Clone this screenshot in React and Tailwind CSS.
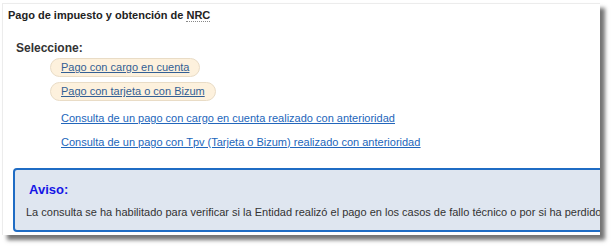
export default function App() {
  const font = { fontFamily: '"Liberation Sans", Arial, sans-serif' };
  return (
    <div className="w-[611px] h-[248px] bg-white overflow-hidden" style={font}>
      <div className="ml-[2px] mt-[3px] w-[598px] h-[232px] bg-white border-l border-t border-[#ececec] shadow-[5px_5px_4px_rgba(0,0,0,0.55)] overflow-hidden">
        <div className="pl-[5px] pt-[5px] text-[11px] font-bold text-[#222] leading-[13px]">
          Pago de impuesto y obtención de{' '}
          <abbr className="no-underline border-b border-dotted border-[#888]">NRC</abbr>
        </div>
        <div className="pl-[13px] pt-[19px] text-[12px] font-bold text-[#333] leading-[14px]">Seleccione:</div>
        <div className="pl-[47px] pt-[3px] flex flex-col items-start gap-[5px]">
          <a className="px-[10px] h-[19px] flex items-center rounded-full bg-[#fdf1dd] border border-[#e9dcc6] text-[11px] text-[#335f94] underline">
            Pago con cargo en cuenta
          </a>
          <a className="px-[10px] h-[19px] flex items-center rounded-full bg-[#fdf1dd] border border-[#e9dcc6] text-[11px] text-[#335f94] underline">
            Pago con tarjeta o con Bizum
          </a>
        </div>
        <div className="pl-[58px] pt-[11px] flex flex-col gap-[11px] text-[11px] leading-[13px] text-[#2266bb] underline">
          <a>Consulta de un pago con cargo en cuenta realizado con anterioridad</a>
          <a>Consulta de un pago con Tpv (Tarjeta o Bizum) realizado con anterioridad</a>
        </div>
        <div className="ml-[10px] mt-[19px] w-[620px] h-[64px] rounded-[4px] border-2 border-[#1f6cc4] bg-[#dfe6f0] pt-[12px] pl-[14px]">
          <div className="text-[13px] font-bold text-[#1515e6] leading-[16px]">Aviso:</div>
          <div className="pt-[8px] -ml-[3px] text-[11px] text-[#333] leading-[13px] whitespace-nowrap">
            La consulta se ha habilitado para verificar si la Entidad realizó el pago en los casos de fallo técnico o por si ha perdido el justificante
          </div>
        </div>
      </div>
    </div>
  );
}
